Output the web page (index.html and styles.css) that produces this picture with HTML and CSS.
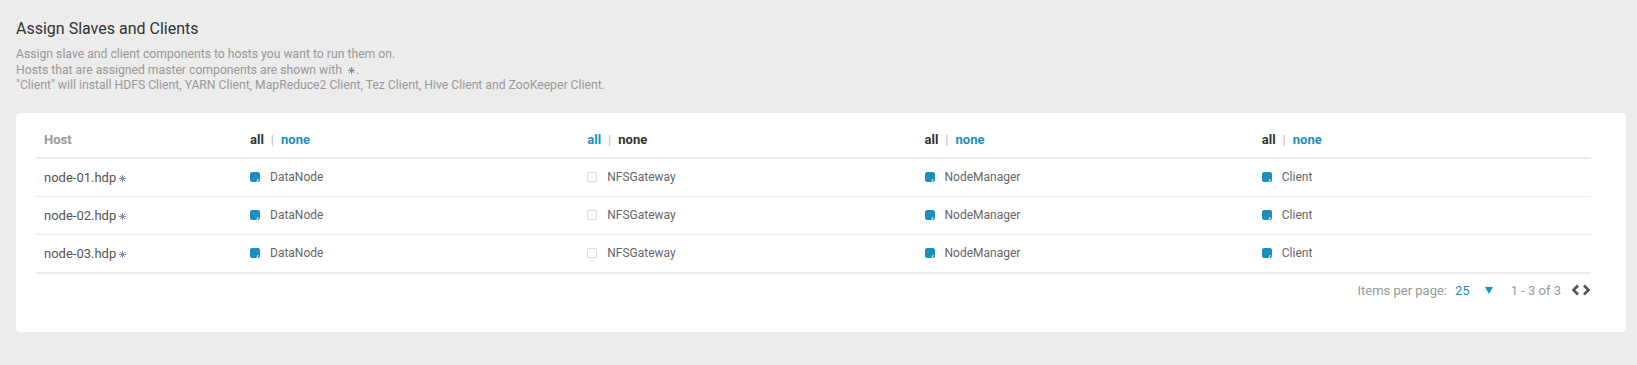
FILE: index.html
```html
<!DOCTYPE html>
<html>
    <head>
        <title>Assign Slaves and Clients</title>
        <link rel="stylesheet" href="styles.css">
    </head>
    <body>
        <div class="page">
            <h2 class="page-title">Assign Slaves and Clients</h2>
            <div class="page-desc">
                <p>Assign slave and client components to hosts you want to run them on.</p>
                <p>Hosts that are assigned master components are shown with <svg class="master-icon" viewBox="0 0 10 10"><path d="M5 1v8M1 5h8M2.2 2.2l5.6 5.6M7.8 2.2l-5.6 5.6"/></svg>.</p>
                <p>"Client" will install HDFS Client, YARN Client, MapReduce2 Client, Tez Client, Hive Client and ZooKeeper Client.</p>
            </div>

            <div class="card">
                <table class="hosts-table">
                    <thead>
                        <tr>
                            <th class="col-host">Host</th>
                            <th><span class="sel-active">all</span><span class="sel-sep">|</span><span class="sel-link">none</span></th>
                            <th><span class="sel-link">all</span><span class="sel-sep">|</span><span class="sel-active">none</span></th>
                            <th><span class="sel-active">all</span><span class="sel-sep">|</span><span class="sel-link">none</span></th>
                            <th><span class="sel-active">all</span><span class="sel-sep">|</span><span class="sel-link">none</span></th>
                        </tr>
                    </thead>
                    <tbody>
                        <tr>
                            <td class="col-host">node-01.hdp<svg class="master-icon" viewBox="0 0 10 10"><path d="M5 1v8M1 5h8M2.2 2.2l5.6 5.6M7.8 2.2l-5.6 5.6"/></svg></td>
                            <td><span class="cb cb-on"></span>DataNode</td>
                            <td><span class="cb"></span>NFSGateway</td>
                            <td><span class="cb cb-on"></span>NodeManager</td>
                            <td><span class="cb cb-on"></span>Client</td>
                        </tr>
                        <tr>
                            <td class="col-host">node-02.hdp<svg class="master-icon" viewBox="0 0 10 10"><path d="M5 1v8M1 5h8M2.2 2.2l5.6 5.6M7.8 2.2l-5.6 5.6"/></svg></td>
                            <td><span class="cb cb-on"></span>DataNode</td>
                            <td><span class="cb"></span>NFSGateway</td>
                            <td><span class="cb cb-on"></span>NodeManager</td>
                            <td><span class="cb cb-on"></span>Client</td>
                        </tr>
                        <tr>
                            <td class="col-host">node-03.hdp<svg class="master-icon" viewBox="0 0 10 10"><path d="M5 1v8M1 5h8M2.2 2.2l5.6 5.6M7.8 2.2l-5.6 5.6"/></svg></td>
                            <td><span class="cb cb-on"></span>DataNode</td>
                            <td><span class="cb"></span>NFSGateway</td>
                            <td><span class="cb cb-on"></span>NodeManager</td>
                            <td><span class="cb cb-on"></span>Client</td>
                        </tr>
                    </tbody>
                </table>

                <div class="pager">
                    <span class="pager-label">Items per page:</span>
                    <span class="pager-size">25</span>
                    <svg class="pager-caret" viewBox="0 0 8 7"><path d="M0 0h8L4 7z"/></svg>
                    <span class="pager-range">1 - 3 of 3</span>
                    <span class="pager-nav">
                        <svg viewBox="0 0 9 12"><path d="M7 1.5L2.5 6 7 10.5"/></svg>
                        <svg viewBox="0 0 9 12"><path d="M2 1.5L6.5 6 2 10.5"/></svg>
                    </span>
                </div>
            </div>
        </div>
    </body>
</html>
```

FILE: styles.css
```css
body {
    margin: 0;
    background: #ececec;
    font-family: Roboto, "Liberation Sans", sans-serif;
    color: #666;
}

.page {
    padding: 19px 11px 33px 16px;
}

.page-title {
    margin: 0;
    font-size: 16px;
    line-height: 20px;
    font-weight: 400;
    color: #333;
}

.page-desc {
    margin-top: 8px;
    font-size: 12.2px;
    line-height: 15.5px;
    color: #999;
}

.page-desc p {
    margin: 0;
}

.master-icon {
    width: 9px;
    height: 9px;
    margin-left: 2px;
    vertical-align: -1px;
    fill: none;
    stroke: #7f90a8;
    stroke-width: 1.1;
}

.card {
    margin-top: 19px;
    background: #fff;
    border-radius: 4px;
    padding: 10px 35px 34px 20px;
}

.hosts-table {
    width: 100%;
    border-collapse: collapse;
    table-layout: fixed;
    font-size: 12px;
}

.hosts-table th,
.hosts-table td {
    padding: 0 8px;
    text-align: left;
    white-space: nowrap;
}

.hosts-table th {
    height: 34px;
    font-size: 13px;
    font-weight: 700;
    border-bottom: 2px solid #ebebeb;
}

.hosts-table td {
    height: 37px;
    border-bottom: 1px solid #ececec;
    color: #666;
}

.hosts-table tbody tr:last-child td {
    border-bottom: 2px solid #ebebeb;
}

.hosts-table .col-host {
    width: 190px;
}

.hosts-table th.col-host {
    color: #999;
}

.hosts-table td.col-host {
    font-size: 13px;
    color: #555;
}

.sel-active {
    color: #333;
}

.sel-link {
    color: #1b8fc0;
}

.sel-sep {
    margin: 0 7px;
    color: #bbb;
    font-weight: 400;
}

.cb {
    display: inline-block;
    position: relative;
    width: 8px;
    height: 8px;
    margin-right: 10px;
    border: 1px solid #dcdcdc;
    border-radius: 2px;
    vertical-align: -1px;
}

.cb-on {
    background: #1b8fc0;
    border-color: #1b8fc0;
}

.cb-on::after {
    content: "";
    position: absolute;
    right: -1px;
    bottom: -1px;
    width: 2px;
    height: 3px;
    border-left: 1px solid #fff;
    transform: skewX(-25deg);
}

.pager {
    display: flex;
    justify-content: flex-end;
    align-items: center;
    margin-top: 9px;
    font-size: 13px;
    color: #999;
}

.pager-size {
    margin-left: 8px;
    color: #1b8fc0;
}

.pager-caret {
    width: 8px;
    height: 7px;
    margin-left: 15px;
    fill: #1b8fc0;
}

.pager-range {
    margin-left: 18px;
}

.pager-nav {
    display: flex;
    gap: 2px;
    margin-left: 10px;
}

.pager-nav svg {
    width: 9px;
    height: 12px;
    fill: none;
    stroke: #555;
    stroke-width: 2.6;
}
```
